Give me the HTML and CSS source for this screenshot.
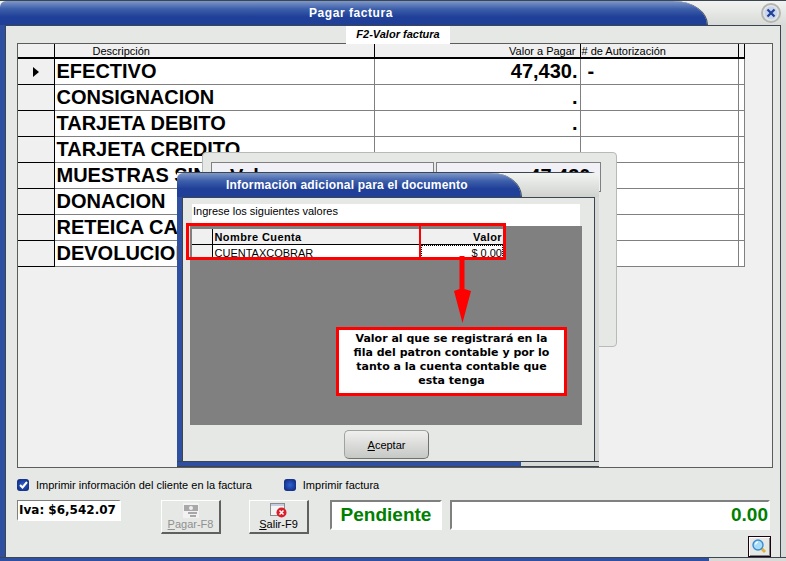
FILE: index.html
```html
<!DOCTYPE html>
<html lang="en">
<head>
<meta charset="UTF-8">
<meta name="viewport" content="width=device-width, initial-scale=1.0">
<title>Pagar factura</title>
<link rel="stylesheet" href="styles.css">
</head>
<body>
<div class="window">
    <div class="titlebar">
        <div class="title-blue">Pagar factura</div>
        <div class="title-rest">
            <svg class="close-icon" width="20" height="20" viewBox="0 0 20 20">
                <circle cx="10" cy="10" r="9" fill="#e4e6e4" stroke="#b4b6b4" stroke-width="2"/>
                <circle cx="10" cy="10" r="6.5" fill="#c8d4ec"/>
                <path d="M6.5 6.5 13.5 13.5M13.5 6.5 6.5 13.5" stroke="#1f3f98" stroke-width="2.2"/>
            </svg>
        </div>
    </div>
    <div class="main">
        <div class="tab-label">F2-Valor factura</div>
        <div class="grid-frame">
            <table class="grid">
                <colgroup>
                    <col class="c-ind"><col class="c-desc"><col class="c-val"><col class="c-aut"><col class="c-end">
                </colgroup>
                <tr class="head">
                    <th></th><th class="h-desc">Descripción</th><th class="h-val">Valor a Pagar</th><th class="h-aut"># de Autorización</th><th></th>
                </tr>
                <tr>
                    <td class="ind"><span class="arrow"></span></td><td class="desc">EFECTIVO</td><td class="val">47,430.</td><td class="aut">-</td><td class="end"></td>
                </tr>
                <tr><td class="ind"></td><td class="desc">CONSIGNACION</td><td class="val">.</td><td></td><td class="end"></td></tr>
                <tr><td class="ind"></td><td class="desc">TARJETA DEBITO</td><td class="val">.</td><td></td><td class="end"></td></tr>
                <tr><td class="ind"></td><td class="desc">TARJETA CREDITO</td><td class="val">.</td><td></td><td class="end"></td></tr>
                <tr><td class="ind"></td><td class="desc">MUESTRAS SIN VALOR</td><td class="val">.</td><td></td><td class="end"></td></tr>
                <tr><td class="ind"></td><td class="desc">DONACION</td><td class="val">.</td><td></td><td class="end"></td></tr>
                <tr><td class="ind"></td><td class="desc">RETEICA CALI</td><td class="val">.</td><td></td><td class="end"></td></tr>
                <tr><td class="ind"></td><td class="desc">DEVOLUCIONES</td><td class="val">.</td><td></td><td class="end"></td></tr>
            </table>
        </div>
        <div class="checks">
            <label class="check"><span class="box on">
                <svg width="9" height="8" viewBox="0 0 9 8"><path d="M1 4 3.5 6.5 8 1" fill="none" stroke="#fff" stroke-width="2"/></svg>
            </span>Imprimir información del cliente en la factura</label>
            <label class="check check-2"><span class="box"></span>Imprimir factura</label>
        </div>
        <div class="actions">
            <div class="iva">Iva: $6,542.07</div>
            <button class="btn disabled" type="button">
                <svg width="16" height="15" viewBox="0 0 16 15">
                    <rect width="16" height="15" fill="#f2f2f2"/>
                    <path d="M1 2h14v6H1z" fill="#a8a8a8"/>
                    <circle cx="8" cy="5" r="2" fill="#eee"/>
                    <path d="M5 9h9v2H5zM7 12h6v2H7z" fill="#a8a8a8"/>
                </svg>
                <span><u>P</u>agar-F8</span>
            </button>
            <button class="btn btn-salir" type="button">
                <svg width="17" height="15" viewBox="0 0 17 15">
                    <rect x="0.5" y="0.5" width="14" height="12" fill="#f4f4f4" stroke="#8c8c8c"/>
                    <path d="M1 1h13v2H1z" fill="#c4cde0"/>
                    <circle cx="11.5" cy="9.5" r="5" fill="#d8202a"/>
                    <path d="M9.5 7.5 13.5 11.5M13.5 7.5 9.5 11.5" stroke="#fff" stroke-width="1.5"/>
                </svg>
                <span><u>S</u>alir-F9</span>
            </button>
            <div class="status">Pendiente</div>
            <div class="total">0.00</div>
        </div>
        <div class="lens-row">
            <button class="lens" type="button">
                <svg width="15" height="15" viewBox="0 0 15 15">
                    <path d="M9 9 13 13" stroke="#e0b040" stroke-width="3"/>
                    <circle cx="6" cy="6" r="5" fill="#a8dcf8" stroke="#3a8cd0" stroke-width="1.4"/>
                    <path d="M3.5 5.5A3 3 0 0 1 6 3" fill="none" stroke="#fff" stroke-width="1.4"/>
                </svg>
            </button>
        </div>
    </div>
    <div class="bottom-edge"><div class="bottom-blue"></div></div>
</div>

<div class="dialog-back">
    <div class="back-row">
        <div class="back-cell back-left">Valor</div>
        <div class="back-cell back-right">47,430.</div>
    </div>
</div>

<div class="dialog">
    <div class="titlebar dialog-bar">
        <div class="title-blue dialog-title">Información adicional para el documento</div>
        <div class="title-rest"></div>
    </div>
    <div class="dialog-main">
        <div class="dialog-hint">Ingrese los siguientes valores</div>
        <div class="dialog-area">
            <table class="sub-grid">
                <colgroup><col class="s-ind"><col class="s-name"><col class="s-val"></colgroup>
                <tr class="sub-head"><th></th><th class="s-left">Nombre Cuenta</th><th class="s-right">Valor</th></tr>
                <tr><td class="ind"></td><td class="s-left">CUENTAXCOBRAR</td><td class="s-right s-focus">$ 0.00</td></tr>
            </table>
        </div>
        <div class="dialog-foot">
            <button class="accept" type="button"><u>A</u>ceptar</button>
        </div>
    </div>
    <div class="bottom-edge dialog-edge"><div class="bottom-blue"></div></div>
</div>

<div class="mark-box"></div>
<div class="mark-split"></div>
<svg class="mark-arrow" width="20" height="68" viewBox="0 0 20 68">
    <path d="M7.5 0h5v33l6.500 2-8.500 32-8.500-32 5.500-2z" fill="#ff0000"/>
</svg>
<div class="callout">Valor al que se registrará en la fila del patron contable y por lo tanto a la cuenta contable que esta tenga</div>
</body>
</html>
```

FILE: styles.css
```css
html, body {
    margin: 0;
    padding: 0;
    height: 100%;
    overflow: hidden;
}

body {
    position: relative;
    width: 786px;
    height: 561px;
    font-family: "Liberation Sans", Arial, sans-serif;
    font-size: 11px;
    color: #000;
    background-color: #e6e8e6;
}

.window {
    display: flex;
    flex-direction: column;
    width: 786px;
    height: 561px;
    box-sizing: border-box;
}

.titlebar {
    display: flex;
    height: 25px;
    flex: none;
    box-sizing: border-box;
    border-top: 1px solid #3c4650;
    background: linear-gradient(#f2f4f2, #d8dad8);
}

.title-blue {
    width: 707px;
    box-sizing: border-box;
    padding: 5px 0 0 309px;
    font-size: 12px;
    font-weight: bold;
    letter-spacing: 0.55px;
    color: #fff;
    background: linear-gradient(#7f98c8 0, #3d5faa 8px, #1f3f98 16px, #1f3f98 100%);
    border-top-left-radius: 6px;
    border-top-right-radius: 34px 24px;
    box-shadow: 1px 0 0 #3c4650;
}

.title-rest {
    flex: 1;
    display: flex;
    justify-content: flex-end;
    padding: 2px 5px 0 0;
}

.close-icon {
    display: block;
}

.main {
    flex: 1;
    display: flex;
    flex-direction: column;
    position: relative;
    box-sizing: border-box;
    margin-left: 5px;
    margin-right: 5px;
    padding: 17px 7px 0 11px;
    background-color: #e6e8e6;
    border: 1px solid #3c4650;
    border-bottom: 0;
    box-shadow: -5px 0 0 #2f4fa0, 5px 0 0 #d8dad8;
}

.tab-label {
    position: absolute;
    left: 340px;
    top: 0;
    width: 104px;
    height: 18px;
    line-height: 16px;
    text-align: center;
    font-weight: bold;
    font-style: italic;
    background-color: #fff;
    z-index: 1;
}

.grid-frame {
    height: 425px;
    flex: none;
    box-sizing: border-box;
    background-color: #f0f0f0;
    border: 1px solid #5c5c5c;
    border-right-color: #5c5c5c;
}

.grid {
    border-collapse: collapse;
    table-layout: fixed;
    width: 726px;
    background-color: #fff;
}

.c-ind { width: 36px; }
.c-desc { width: 320px; }
.c-val { width: 206px; }
.c-aut { width: 158px; }
.c-end { width: 6px; }

.grid tr {
    height: 26px;
}

.grid td {
    padding: 0;
    border: 1px solid #808080;
    border-top: 0;
    overflow: hidden;
    white-space: nowrap;
}

.grid tr.head {
    height: 13px;
    background-color: #f0f0f0;
}

.grid th {
    padding: 0;
    height: 13px;
    font-weight: normal;
    line-height: 12px;
    border-right: 1px solid #000;
    border-bottom: 2px solid #000;
    overflow: hidden;
    white-space: nowrap;
}

.h-desc {
    text-align: left;
    padding-left: 38px !important;
}

.h-val {
    text-align: right;
    padding-right: 4px !important;
}

.h-aut {
    text-align: left;
    padding-left: 1px !important;
}

.grid td.ind {
    background-color: #f0f0f0;
    border-right: 1px solid #000;
    border-bottom: 1px solid #000;
    border-left: 0;
    text-align: center;
}

.arrow {
    display: inline-block;
    width: 0;
    height: 0;
    border-left: 6px solid #000;
    border-top: 5px solid transparent;
    border-bottom: 5px solid transparent;
    vertical-align: middle;
}

.desc {
    padding-left: 2px !important;
    font-size: 20px;
    font-weight: bold;
}

.val {
    padding-right: 2px !important;
    text-align: right;
    font-size: 20px;
    font-weight: bold;
    line-height: 24px;
}

.aut {
    padding-left: 7px !important;
    font-size: 20px;
    font-weight: bold;
}

.grid td.end {
    background-color: #fff;
}

.checks {
    display: flex;
    align-items: center;
    height: 12px;
    margin-top: 11px;
}

.check {
    display: flex;
    align-items: center;
    gap: 7px;
}

.check-2 {
    margin-left: 32px;
}

.box {
    display: flex;
    align-items: center;
    justify-content: center;
    width: 12px;
    height: 12px;
    border-radius: 3px;
    background: radial-gradient(#2f62d0, #0a1f70);
    border: 0;
}

.actions {
    display: flex;
    align-items: flex-start;
    margin-top: 9px;
}

.iva {
    width: 104px;
    height: 21px;
    box-sizing: border-box;
    padding: 2px 0 0 1px;
    font-family: "DejaVu Sans", sans-serif;
    font-size: 12px;
    font-weight: bold;
    background-color: #fff;
    border: 1px solid #5c5c5c;
    border-color: #808080 #fff #fff #808080;
    border-width: 1px 2px 2px 1px;
}

.btn {
    display: flex;
    flex-direction: column;
    align-items: center;
    width: 60px;
    height: 34px;
    margin: 0 0 0 40px;
    padding: 2px 0 0;
    box-sizing: border-box;
    font-family: inherit;
    font-size: 11px;
    line-height: 13px;
    color: #000;
    background-color: #e6e8e6;
    border: 1px solid;
    border-color: #fff #606060 #606060 #fff;
    border-width: 1px 2px 2px 1px;
}

.btn.disabled {
    color: #909090;
}

.btn-salir {
    margin-left: 28px;
}

.status {
    width: 112px;
    height: 30px;
    margin-left: 21px;
    box-sizing: border-box;
    text-align: center;
    line-height: 25px;
    font-size: 19px;
    font-weight: bold;
    color: #008000;
    background-color: #fff;
    border: 2px solid #808080;
    border-right-color: #fff;
    border-bottom-color: #fff;
}

.total {
    width: 320px;
    height: 30px;
    margin-left: 8px;
    box-sizing: border-box;
    padding-right: 0;
    text-align: right;
    line-height: 25px;
    font-size: 19px;
    font-weight: bold;
    color: #008000;
    background-color: #fff;
    border: 2px solid #808080;
    border-right-color: #fff;
    border-bottom-color: #fff;
}

.lens-row {
    display: flex;
    justify-content: flex-end;
    padding-right: 2px;
    margin-top: 2px;
}

.lens {
    width: 23px;
    height: 21px;
    padding: 0;
    box-sizing: border-box;
    display: flex;
    align-items: center;
    justify-content: center;
    background-color: #e6e8e6;
    border: 1px solid #200010;
    box-shadow: inset 1px 1px 0 #fff, inset -1px -1px 0 #808080;
}

.bottom-edge {
    height: 6px;
    flex: none;
    box-sizing: border-box;
    background-color: #d8dad8;
    border-top: 1px solid #3c4650;
    border-bottom: 1px solid #3c4650;
}

.bottom-blue {
    width: 709px;
    height: 100%;
    background-color: #2f4fa0;
}

/* dialog sitting behind the front one */
.dialog-back {
    position: absolute;
    left: 202px;
    top: 152px;
    width: 415px;
    height: 195px;
    box-sizing: border-box;
    padding: 9px 15px 0 8px;
    background-color: #e6e8e6;
    border: 1px solid #b8bab8;
    border-radius: 4px;
}

.back-row {
    display: flex;
    gap: 2px;
    height: 30px;
    overflow: hidden;
}

.back-cell {
    box-sizing: border-box;
    padding: 2px 4px;
    font-size: 20px;
    font-weight: bold;
    background-color: #f0f0f6;
    border: 1px solid #808080;
}

.back-left {
    width: 223px;
    padding-left: 18px;
}

.back-right {
    flex: 1;
    text-align: right;
}

/* front dialog */
.dialog {
    position: absolute;
    left: 177px;
    top: 172px;
    width: 422px;
    height: 295px;
    display: flex;
    flex-direction: column;
    border-top-right-radius: 8px;
    overflow: hidden;
}

.dialog-bar {
    background: linear-gradient(#f2f4f2, #d0d2d0);
}

.dialog-title {
    width: 344px;
    padding: 5px 0 0 49px;
    letter-spacing: 0.2px;
    font-size: 12px;
    border-top-right-radius: 30px 24px;
}

.dialog-main {
    flex: 1;
    display: flex;
    flex-direction: column;
    box-sizing: border-box;
    margin: 0 4px 0 5px;
    padding: 6px 12px 0 7px;
    background-color: #e6e8e6;
    border: 1px solid #3c4650;
    border-bottom: 0;
    box-shadow: -5px 0 0 #2f4fa0, 4px 0 0 #d8dad8;
}

.dialog-hint {
    height: 22px;
    flex: none;
    margin: 0 2px;
    box-sizing: border-box;
    padding: 1px 0 0 1px;
    background-color: #fff;
}

.dialog-area {
    height: 199px;
    flex: none;
    box-sizing: border-box;
    padding: 3px 0 0 2px;
    background-color: #808080;
}

.sub-grid {
    border-collapse: collapse;
    table-layout: fixed;
    width: 311px;
    background-color: #fff;
}

.s-ind { width: 20px; }
.s-name { width: 209px; }
.s-val { width: 82px; }

.sub-grid th, .sub-grid td {
    padding: 0;
    height: 15px;
    line-height: 14px;
    white-space: nowrap;
    overflow: hidden;
}

.sub-head {
    background-color: #f0f0f0;
}

.sub-grid th {
    font-weight: bold;
    letter-spacing: 0.4px;
    border-bottom: 1px solid #000;
}

.sub-grid th:first-child {
    border-right: 1px solid #000;
}

.sub-grid td.ind {
    background-color: #f0f0f0;
    border-right: 1px solid #000;
}

.s-left {
    padding-left: 2px !important;
    text-align: left;
}

.s-right {
    padding-right: 1px !important;
    text-align: right;
}

.s-focus {
    outline: 1px dotted #000;
    outline-offset: -1px;
}

.dialog-foot {
    display: flex;
    justify-content: flex-start;
    padding: 5px 0 0 154px;
}

.accept {
    width: 85px;
    height: 29px;
    padding: 0;
    font-family: inherit;
    font-size: 11px;
    color: #000;
    background: linear-gradient(#f0f0ee, #c6c8c6);
    border: 1px solid #a0a2a0;
    border-bottom-color: #707270;
    border-right-color: #707270;
    border-radius: 5px;
}

.dialog-edge .bottom-blue {
    width: 344px;
}

/* red annotations drawn on top of the capture */
.mark-box {
    position: absolute;
    left: 186px;
    top: 223px;
    width: 320px;
    height: 37px;
    box-sizing: border-box;
    border: 3px solid #ff0000;
}

.mark-split {
    position: absolute;
    left: 419px;
    top: 226px;
    width: 2px;
    height: 31px;
    background-color: #ff0000;
}

.mark-arrow {
    position: absolute;
    left: 452px;
    top: 256px;
}

.callout {
    position: absolute;
    left: 336px;
    top: 327px;
    width: 231px;
    height: 69px;
    box-sizing: border-box;
    padding: 2px 8px 0;
    text-align: center;
    font-family: "DejaVu Sans", sans-serif;
    font-size: 11px;
    font-weight: bold;
    line-height: 14px;
    background-color: #fff;
    border: 3px solid #ff0000;
}
```
